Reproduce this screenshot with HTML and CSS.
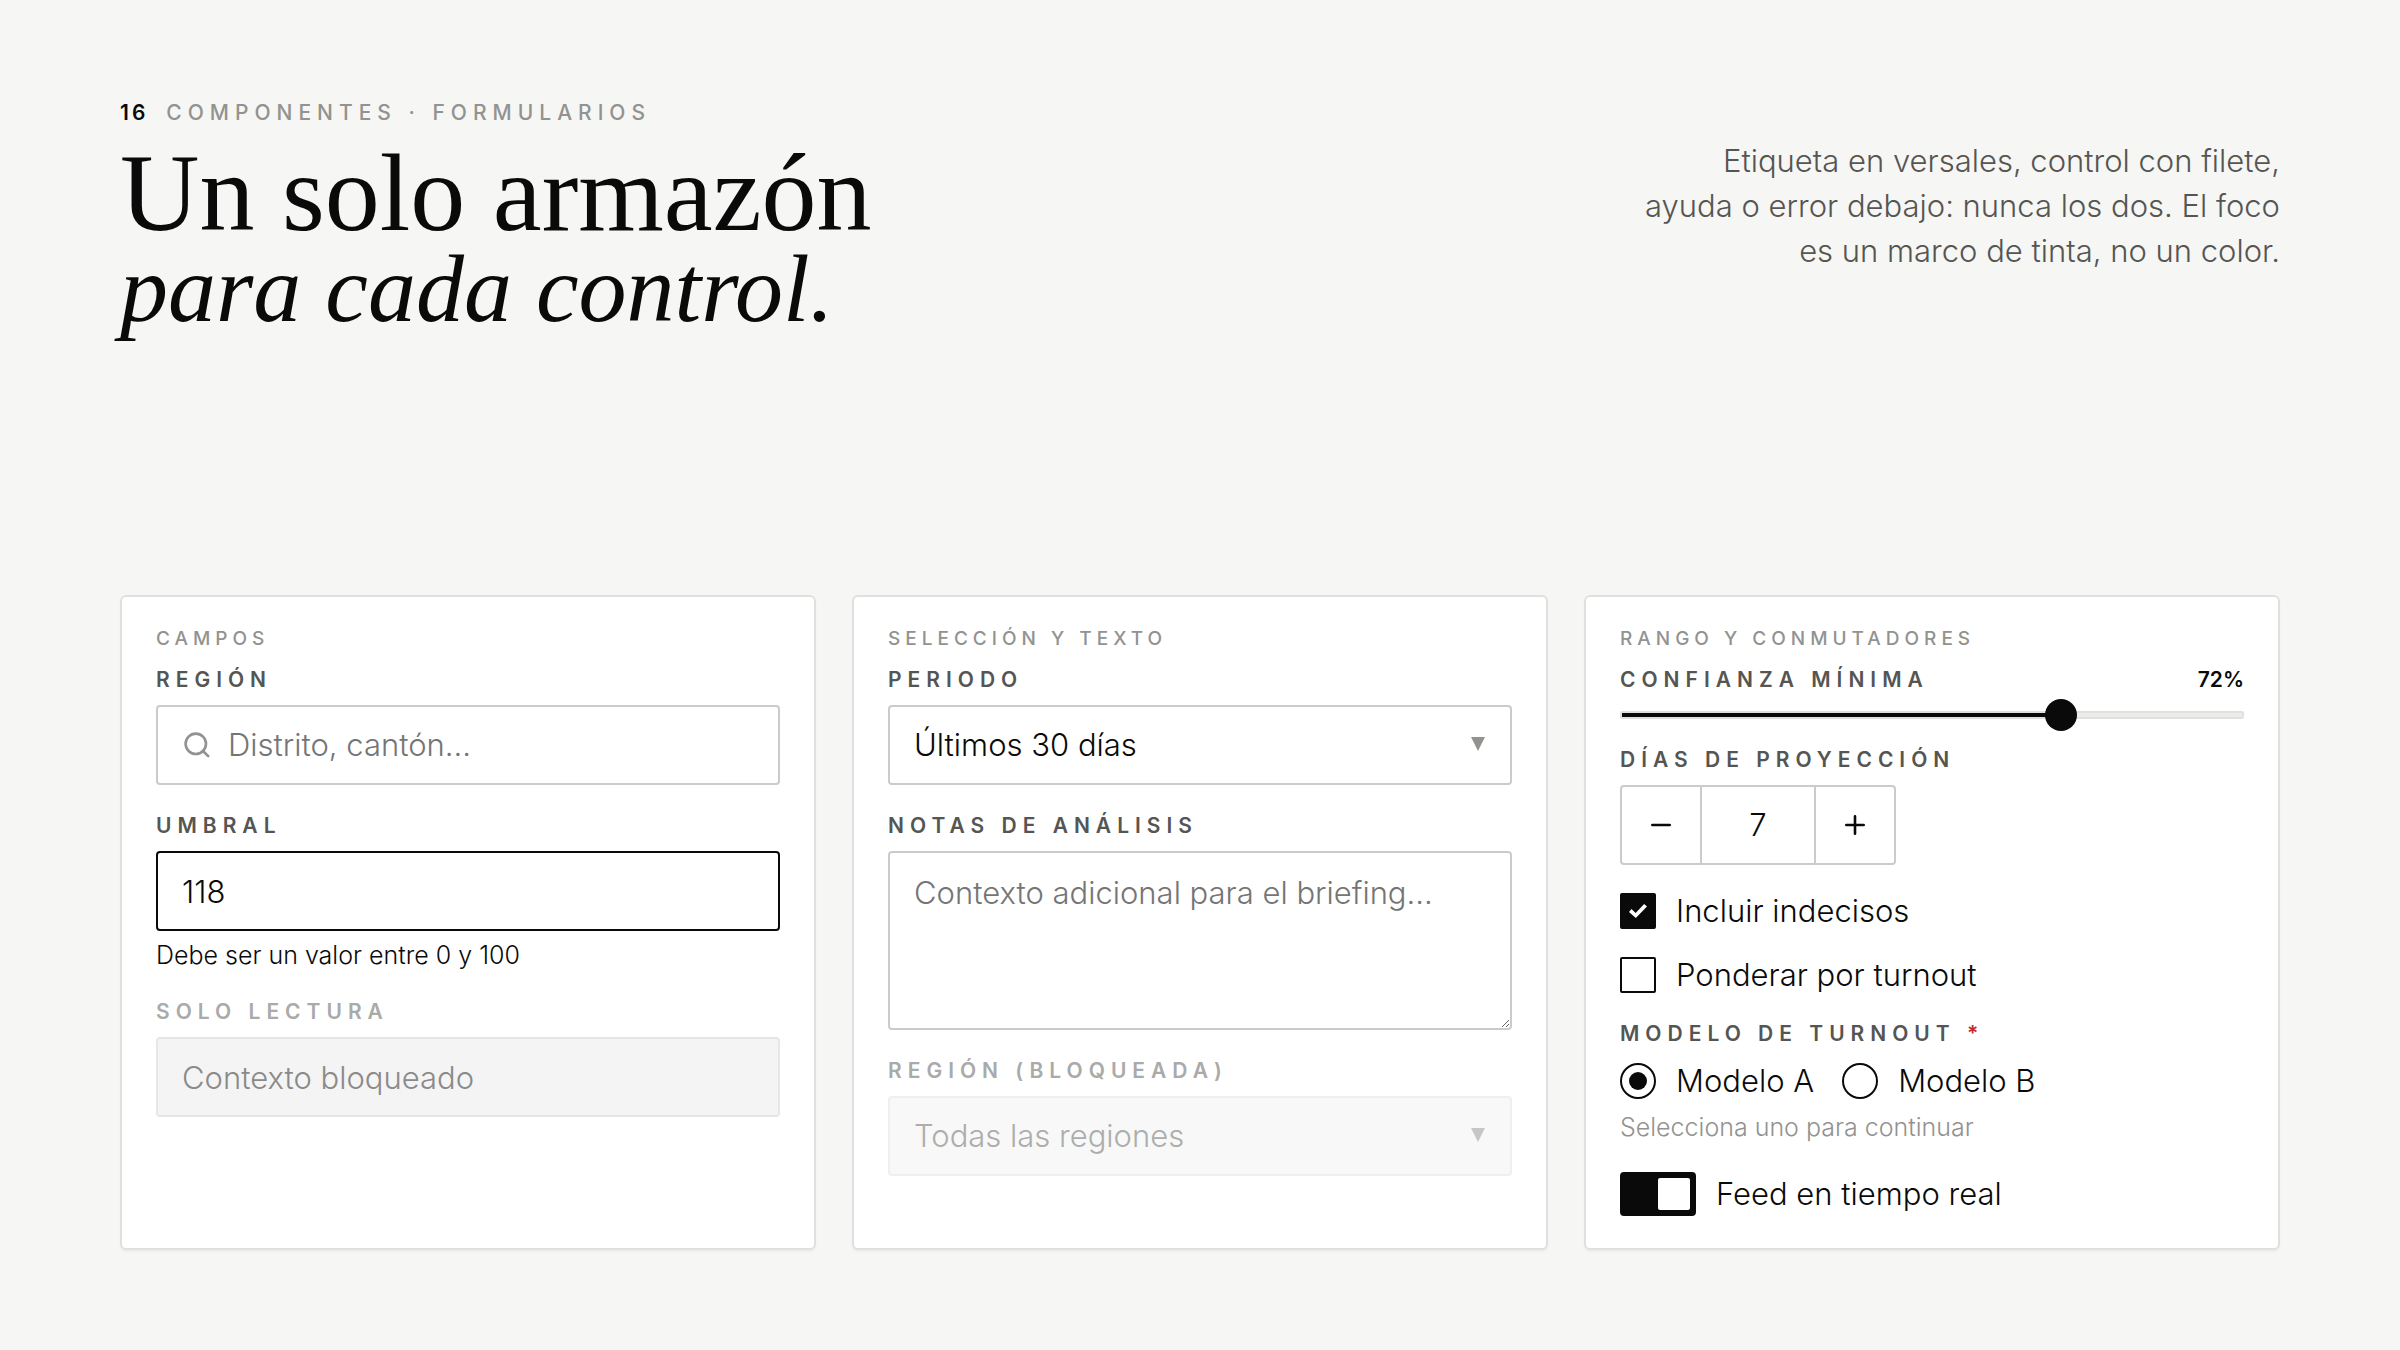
FILE: index.html
```html
<!DOCTYPE html>
<html lang="es">
<head>
<meta charset="utf-8">
<meta name="viewport" content="width=device-width, initial-scale=1">
<title>Componentes · Formularios</title>
<link rel="stylesheet" href="styles.css">
</head>
<body>
<main class="page">
  <header class="header">
    <div class="heading">
      <p class="eyebrow"><span class="eyebrow-number">16</span><span>Componentes · Formularios</span></p>
      <h1 class="title">Un solo armazón <em>para cada control.</em></h1>
    </div>
    <p class="intro">Etiqueta en versales, control con filete, ayuda o error debajo: nunca los dos. El foco es un marco de tinta, no un color.</p>
  </header>

  <form class="cards">
    <section class="card">
      <h2 class="card-title">Campos</h2>
      <div class="stack">
        <div class="field">
          <label class="label" for="region">Región</label>
          <div class="control search">
            <svg class="search-icon" viewBox="0 0 28 28" aria-hidden="true"><circle cx="13.8" cy="12.8" r="10.2"/><path d="M21 20L26.2 25.2"/></svg>
            <input class="search-input" id="region" type="text" placeholder="Distrito, cantón...">
          </div>
        </div>
        <div class="field">
          <label class="label" for="umbral">Umbral</label>
          <input class="control control-active" id="umbral" type="text" value="118" aria-describedby="umbral-error">
          <p class="hint hint-error" id="umbral-error">Debe ser un valor entre 0 y 100</p>
        </div>
        <div class="field">
          <label class="label label-muted" for="contexto">Solo lectura</label>
          <input class="control control-readonly" id="contexto" type="text" value="Contexto bloqueado" readonly>
        </div>
      </div>
    </section>

    <section class="card">
      <h2 class="card-title">Selección y texto</h2>
      <div class="stack">
        <div class="field">
          <label class="label" for="periodo">Periodo</label>
          <div class="select">
            <select class="control" id="periodo"><option>Últimos 30 días</option></select>
          </div>
        </div>
        <div class="field">
          <label class="label" for="notas">Notas de análisis</label>
          <textarea class="control textarea" id="notas" placeholder="Contexto adicional para el briefing..."></textarea>
        </div>
        <div class="field">
          <label class="label label-muted" for="bloqueada">Región (bloqueada)</label>
          <div class="select select-disabled">
            <select class="control control-disabled" id="bloqueada" disabled><option>Todas las regiones</option></select>
          </div>
        </div>
      </div>
    </section>

    <section class="card">
      <h2 class="card-title">Rango y conmutadores</h2>
      <div class="stack stack-tight">
        <div class="field">
          <div class="label-row">
            <label class="label" for="confianza">Confianza mínima</label>
            <output class="value" for="confianza">72%</output>
          </div>
          <input class="range" id="confianza" type="range" min="0" max="100" value="72">
        </div>
        <div class="field">
          <label class="label" for="dias">Días de proyección</label>
          <div class="stepper">
            <button class="step" type="button" aria-label="Restar"><svg class="step-icon" viewBox="0 0 24 24" aria-hidden="true"><path d="M3.3 12H20.7"/></svg></button>
            <input class="step-value" id="dias" type="text" inputmode="numeric" value="7">
            <button class="step" type="button" aria-label="Sumar"><svg class="step-icon" viewBox="0 0 24 24" aria-hidden="true"><path d="M3.3 12H20.7M12 3.3V20.7"/></svg></button>
          </div>
        </div>
        <div class="checks">
          <label class="option"><input class="box" type="checkbox" checked>Incluir indecisos</label>
          <label class="option"><input class="box" type="checkbox">Ponderar por turnout</label>
        </div>
        <fieldset class="field group">
          <legend class="label">Modelo de turnout <span class="required">*</span></legend>
          <div class="radios">
            <label class="option"><input class="radio" type="radio" name="modelo" checked>Modelo A</label>
            <label class="option"><input class="radio" type="radio" name="modelo">Modelo B</label>
          </div>
          <p class="hint">Selecciona uno para continuar</p>
        </fieldset>
        <label class="option option-switch"><input class="switch" type="checkbox" role="switch" checked>Feed en tiempo real</label>
      </div>
    </section>
  </form>
</main>
</body>
</html>
```
FILE: styles.css
```css
:root {
  --ink: #0a0a0a;
  --text: #555553;
  --muted: #929290;
  --line: #cbcbca;
  --paper: #f6f6f4;
  --serif: "Liberation Serif", serif;
  --sans: Inter, "Liberation Sans", sans-serif;
}

*, *::before, *::after { box-sizing: border-box; }

body {
  margin: 0;
  background: var(--paper);
  color: var(--ink);
  font: 300 31px/44px var(--sans);
}

h1, h2, p { margin: 0; }

.page {
  display: flex;
  flex-direction: column;
  justify-content: space-between;
  gap: 64px;
  min-height: 100vh;
  padding: 97px 120px 100px;
}

/* Header */
.header {
  display: flex;
  justify-content: space-between;
  align-items: flex-start;
  gap: 64px;
}

.eyebrow {
  display: flex;
  gap: 18px;
  margin-bottom: 18px;
  color: var(--muted);
  font-size: 21px;
  font-weight: 500;
  line-height: 32px;
  letter-spacing: 6px;
  text-transform: uppercase;
}

.eyebrow-number {
  color: var(--ink);
  font-weight: 600;
  letter-spacing: 3px;
}

.title {
  font: 400 110px/92px var(--serif);
}

.title em {
  display: block;
  font-size: 96px;
  line-height: 100px;
}

.intro {
  max-width: 650px;
  margin-top: 41px;
  color: var(--text);
  line-height: 45px;
  text-align: right;
}

/* Cards */
.cards {
  display: grid;
  grid-template-columns: repeat(3, minmax(0, 1fr));
  gap: 36px;
}

.card {
  padding: 29px 34px 32px;
  background: #fff;
  border: 2px solid #e0e0de;
  border-radius: 6px;
  box-shadow: 0 2px 2px rgba(0, 0, 0, 0.04);
}

.card-title {
  margin-bottom: 14px;
  color: var(--muted);
  font-size: 19px;
  font-weight: 500;
  line-height: 26px;
  letter-spacing: 5px;
  text-transform: uppercase;
}

.stack {
  display: flex;
  flex-direction: column;
  gap: 27px;
}

.stack-tight { gap: 21px; }

.field {
  display: flex;
  flex-direction: column;
}

.label {
  display: block;
  margin-bottom: 11px;
  padding: 0;
  color: var(--text);
  font-size: 21px;
  font-weight: 600;
  line-height: 28px;
  letter-spacing: 6px;
  text-transform: uppercase;
}

.label-muted { color: #aaaaa9; }

.label-row {
  display: flex;
  justify-content: space-between;
}

.value {
  font-size: 21px;
  font-weight: 600;
  line-height: 28px;
}

.required { color: #c62828; }

.hint {
  margin-top: 8px;
  color: var(--muted);
  font-size: 25px;
  line-height: 32px;
}

.hint-error { color: var(--ink); }

/* Text controls */
.control {
  display: block;
  width: 100%;
  height: 80px;
  padding: 0 24px;
  background: #fff;
  border: 2px solid var(--line);
  border-radius: 4px;
  color: var(--ink);
  font: inherit;
  outline: none;
  appearance: none;
}

.control::placeholder,
.search-input::placeholder { color: #757575; }

.control-active { border-color: var(--ink); }

.control-readonly {
  background: #f4f4f4;
  border-color: #e6e6e6;
  color: #8a8a89;
}

.control-disabled {
  background: #f8f8f8;
  border-color: #efefee;
  color: #adadac;
  opacity: 1;
}

.search {
  display: flex;
  align-items: center;
  gap: 18px;
}

.search-icon {
  flex: none;
  width: 28px;
  height: 28px;
  fill: none;
  stroke: var(--muted);
  stroke-width: 2.6;
  stroke-linecap: round;
}

.search-input {
  flex: 1;
  min-width: 0;
  padding: 0;
  background: none;
  border: 0;
  color: inherit;
  font: inherit;
  outline: none;
}

.select { position: relative; }

.select::after {
  content: "";
  position: absolute;
  top: 32px;
  right: 27px;
  width: 14px;
  height: 14px;
  background: var(--muted);
  clip-path: polygon(0 0, 100% 0, 50% 100%);
  pointer-events: none;
}

.select-disabled::after { background: #c6c6c5; }

.textarea {
  height: 179px;
  padding: 18px 24px;
  resize: vertical;
}

/* Range */
.range {
  width: 100%;
  height: 32px;
  margin: -6px 0;
  background: none;
  appearance: none;
}

.range::-webkit-slider-runnable-track {
  height: 8px;
  background: linear-gradient(var(--ink), var(--ink)) 0 0 / 72% 100% no-repeat padding-box, #ececeb;
  border: 2px solid #e0e0de;
  border-radius: 2px;
}

.range::-webkit-slider-thumb {
  width: 32px;
  height: 32px;
  margin-top: -14px;
  background: var(--ink);
  border-radius: 50%;
  appearance: none;
}

/* Stepper */
.stepper {
  display: flex;
  align-self: flex-start;
  height: 80px;
  border: 2px solid var(--line);
  border-radius: 4px;
}

.step {
  display: grid;
  place-items: center;
  width: 78px;
  padding: 0;
  background: none;
  border: 0;
}

.step-icon {
  width: 24px;
  height: 24px;
  fill: none;
  stroke: var(--ink);
  stroke-width: 2.6;
  stroke-linecap: round;
}

.step-value {
  width: 116px;
  padding: 0;
  background: none;
  border: solid var(--line);
  border-width: 0 2px;
  color: var(--ink);
  font: inherit;
  text-align: center;
  outline: none;
}

/* Checkboxes, radios and switch */
.checks {
  display: flex;
  flex-direction: column;
  gap: 20px;
  padding: 3px 0 2px;
}

.option {
  display: flex;
  align-items: center;
  gap: 20px;
}

.box,
.radio {
  display: grid;
  place-items: center;
  flex: none;
  width: 36px;
  height: 36px;
  margin: 0;
  background: #fff;
  border: 2px solid var(--ink);
  border-radius: 2px;
  appearance: none;
}

.box:checked { background: var(--ink); }

.box:checked::after {
  content: "";
  width: 18px;
  height: 14px;
  background: #fff;
  clip-path: polygon(0 57%, 14% 36%, 37% 64%, 84% 0, 100% 18%, 38% 100%);
}

.radio { border-radius: 50%; }

.radio:checked::after {
  content: "";
  width: 18px;
  height: 18px;
  background: var(--ink);
  border-radius: 50%;
}

.group {
  min-width: 0;
  margin: 0;
  padding: 0;
  border: 0;
}

.radios {
  display: flex;
  gap: 28px;
}

.option-switch { margin-top: 8px; }

.switch {
  display: flex;
  align-items: center;
  flex: none;
  width: 76px;
  height: 44px;
  margin: 0;
  padding: 0 4px;
  background: #fff;
  border: 2px solid var(--ink);
  border-radius: 4px;
  appearance: none;
}

.switch::after {
  content: "";
  width: 32px;
  height: 32px;
  background: var(--ink);
  border-radius: 2px;
}

.switch:checked {
  justify-content: flex-end;
  background: var(--ink);
}

.switch:checked::after { background: #fff; }

@media (max-width: 1500px) {
  .page { padding: 48px; }
  .header { flex-direction: column; }
  .intro { margin-top: 0; text-align: left; }
  .cards { grid-template-columns: 1fr; }
}
```
